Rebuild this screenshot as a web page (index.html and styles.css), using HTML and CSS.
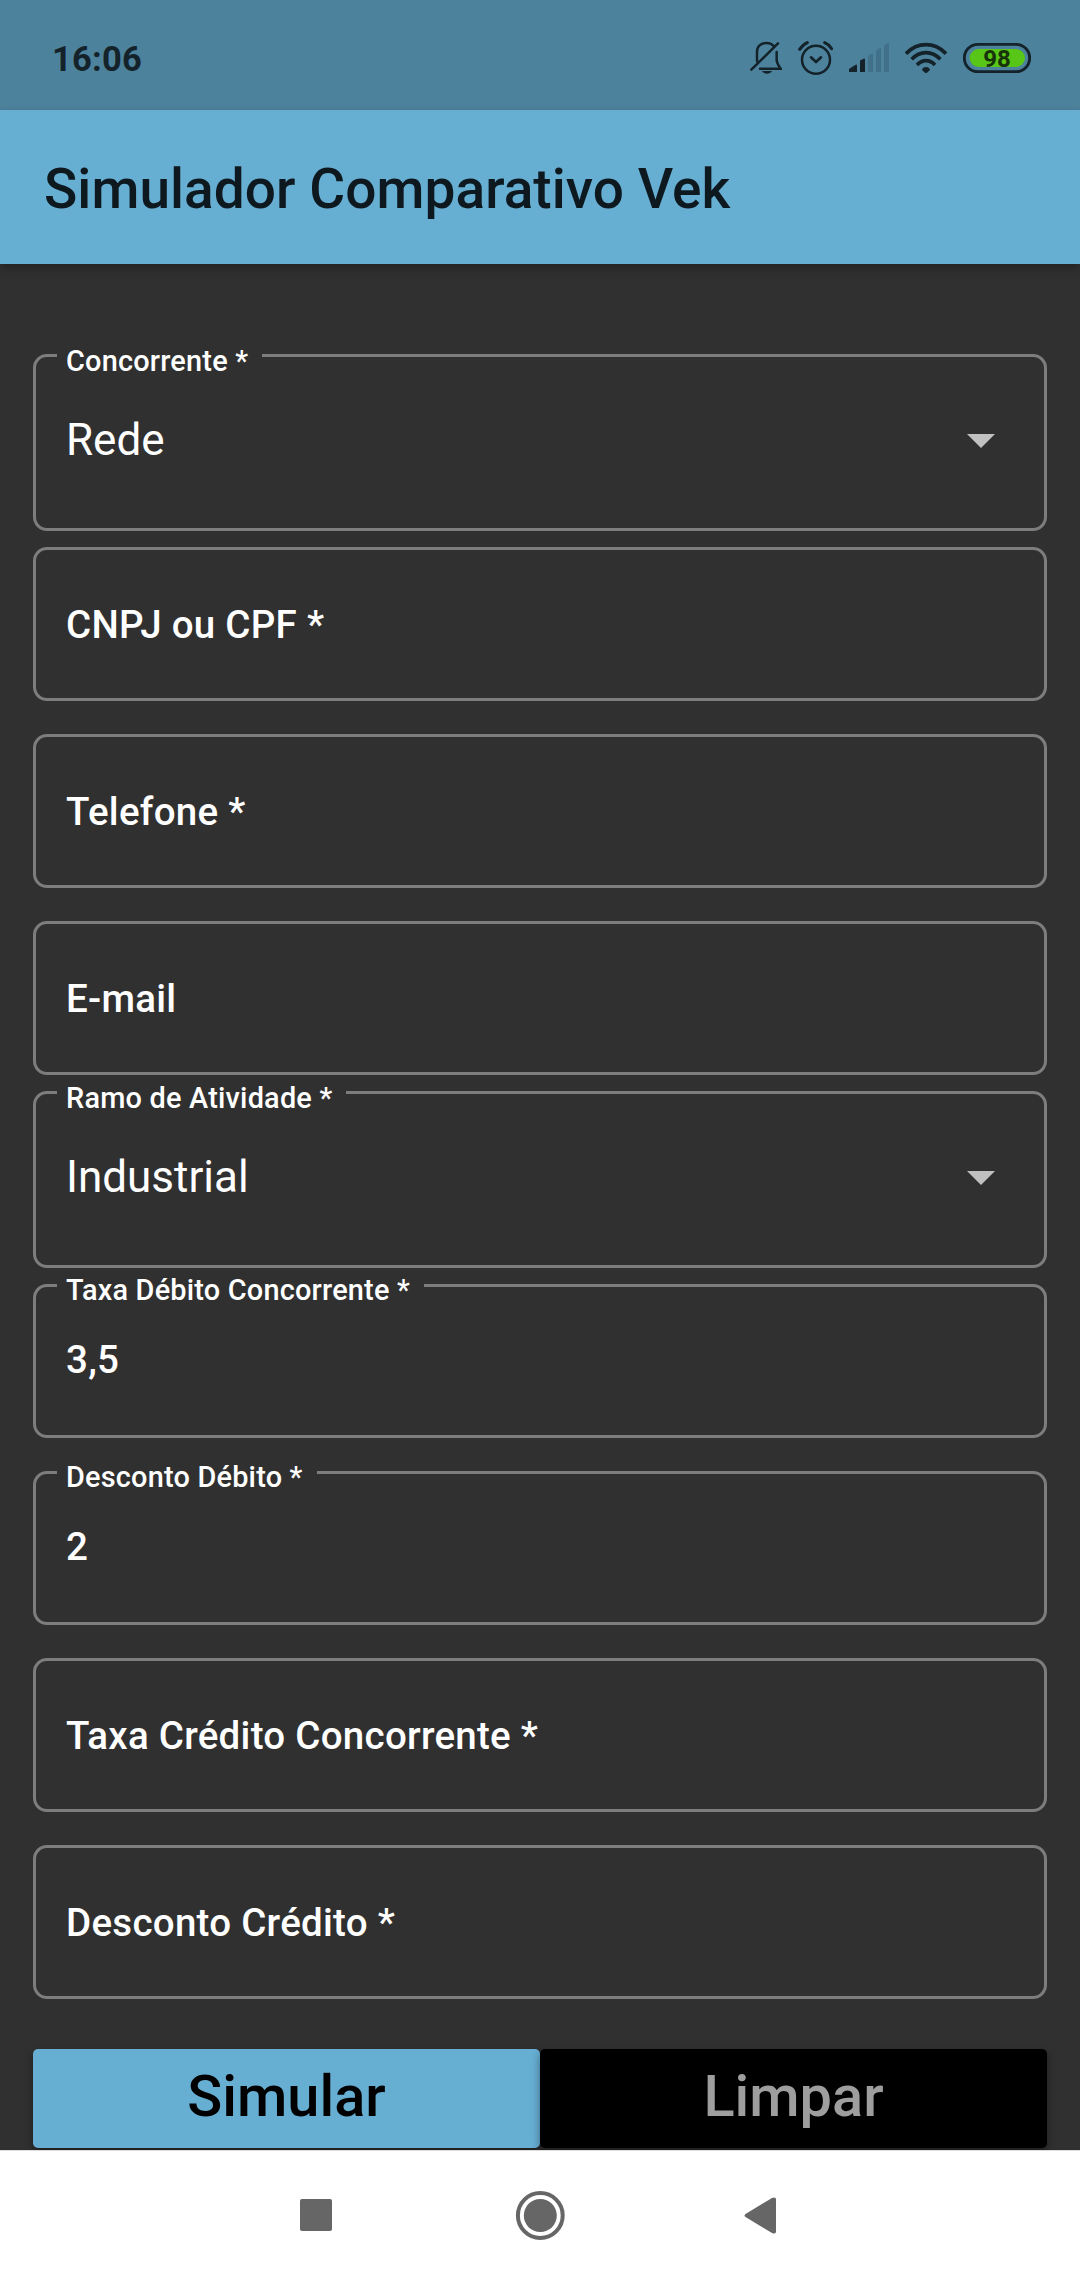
FILE: index.html
```html
<!DOCTYPE html>
<html lang="pt-BR">
<head>
<meta charset="utf-8">
<title>Simulador Comparativo Vek</title>
<link rel="stylesheet" href="styles.css">
</head>
<body>
<div class="screen">
  <header class="status-bar">
    <span class="clock">16:06</span>
    <div class="status-icons">
      <svg width="32" height="36" viewBox="90 60 96 108" fill="none" stroke="#14222a" stroke-width="7.500" stroke-linecap="round">
        <path d="M111 124V96C111 78 124 69 140 69C148 69 155 72 160 77M170 96V120C170 130 177 138 182 146H120M94 149L174 70"/>
        <path d="M126 153H156C150 164 132 164 126 153Z" fill="#14222a" stroke="none"/>
      </svg>
      <svg width="35" height="36" viewBox="234 60 105 108" fill="none" stroke="#14222a" stroke-width="7.500" stroke-linecap="round" stroke-linejoin="round">
        <circle cx="288" cy="119" r="42"/>
        <path d="M273 112L288 126L303 112" stroke-width="8"/>
        <path d="M239 88Q248 74 262 68M314 68Q328 74 335 86" stroke-width="9"/>
      </svg>
      <svg width="40" height="36" viewBox="387 60 120 108" fill="#14222a">
        <path d="M387 156V149Q387 146 390 145L407 134Q411 132 411 137V156ZM420 156V124Q420 121 423 120L431 116Q435 115 435 120V156Z"/>
        <path fill="#41708a" d="M444 156V110Q444 107 447 106L455 102Q459 100 459 105V156ZM468 156V94Q468 91 471 89L479 85Q483 83 483 88V156ZM492 156V79Q492 76 495 74L503 69Q507 68 507 72V156Z"/>
      </svg>
      <svg width="42" height="36" viewBox="555 60 126 108" fill="none" stroke="#14222a" stroke-width="11">
        <path d="M558 101Q584 74 618 74Q652 74 678 101M575 118Q594 98 618 98Q642 98 661 118M591 135Q603 122 618 122Q633 122 645 135"/>
        <path d="M606 150Q608 141 618 141Q628 141 630 150L621 158Q618 160 615 158Z" fill="#14222a" stroke="none"/>
      </svg>
      <svg width="68" height="36" viewBox="729 60 204 108">
        <rect x="733" y="73" width="196" height="82" rx="41" fill="none" stroke="#14222a" stroke-width="8.500"/>
        <rect x="749" y="87" width="166" height="54" rx="27" fill="#58c616"/>
        <text class="battery-level" x="831" y="140" text-anchor="middle">98</text>
      </svg>
    </div>
  </header>
  <div class="app-bar"><h1>Simulador Comparativo Vek</h1></div>
  <main class="form">
    <fieldset class="field select">
      <legend>Concorrente *</legend>
      <span>Rede</span>
      <svg class="arrow" width="28" height="14" viewBox="0 0 28 14"><path d="M0 0H28L14 14Z"/></svg>
    </fieldset>
    <fieldset class="field after-select"><span>CNPJ ou CPF *</span></fieldset>
    <fieldset class="field"><span>Telefone *</span></fieldset>
    <fieldset class="field"><span>E-mail</span></fieldset>
    <fieldset class="field select close">
      <legend>Ramo de Atividade *</legend>
      <span>Industrial</span>
      <svg class="arrow" width="28" height="14" viewBox="0 0 28 14"><path d="M0 0H28L14 14Z"/></svg>
    </fieldset>
    <fieldset class="field after-select filled"><legend>Taxa Débito Concorrente *</legend><span>3,5</span></fieldset>
    <fieldset class="field filled"><legend>Desconto Débito *</legend><span>2</span></fieldset>
    <fieldset class="field"><span>Taxa Crédito Concorrente *</span></fieldset>
    <fieldset class="field"><span>Desconto Crédito *</span></fieldset>
    <div class="actions">
      <button class="primary">Simular</button>
      <button class="secondary">Limpar</button>
    </div>
  </main>
  <nav class="nav-bar">
    <svg width="50" height="50" viewBox="0 0 50 50"><rect x="9" y="9" width="32" height="32" rx="2"/></svg>
    <svg width="50" height="50" viewBox="0 0 50 50"><circle cx="25.300" cy="25.500" r="22.400" fill="none" stroke="#666" stroke-width="4"/><circle cx="25.300" cy="25.500" r="16.500"/></svg>
    <svg width="50" height="50" viewBox="0 0 50 50"><path d="M6.500 24Q4.500 25.500 6.500 27L33 43Q37 44.500 37 41.500V9.500Q37 6.500 33 8Z"/></svg>
  </nav>
</div>
</body>
</html>
```
FILE: styles.css
```css
* { box-sizing: border-box; }
body { margin: 0; background: #303030; font-family: Roboto, "Liberation Sans", sans-serif; }
.screen { width: 1080px; height: 2280px; display: flex; flex-direction: column; overflow: hidden; }
.status-bar {
  height: 110px; flex: none; background: #4d829d; color: #14222a;
  display: flex; justify-content: space-between; padding: 40px 49px 0 52px;
}
.clock { font-size: 34.5px; line-height: 38px; font-weight: 700; letter-spacing: .2px; }
.status-icons { display: flex; gap: 16px; }
.battery-level { font-size: 72px; font-weight: 700; fill: #17330b; }
.app-bar {
  height: 154px; flex: none; background: #67aed3; padding: 3px 0 0 44px;
  display: flex; align-items: center; box-shadow: 0 4px 9px rgba(0, 0, 0, .3);
}
h1 { margin: 0; font-size: 55px; font-weight: 500; line-height: 64px; letter-spacing: .05px; color: #0e191f; }
.form { flex: 1; padding: 90px 33px 0; color: #fff; }
.field {
  display: flex; align-items: center; min-width: 0; width: 1014px; height: 154px;
  margin: 33px 0 0; padding: 2px 49px 0 30px;
  border: 3px solid #7d7d7d; border-radius: 14px;
  font-size: 38.5px; font-weight: 500; line-height: 46px; letter-spacing: .275px;
}
.field.select {
  height: 177px; margin-top: 0; padding-top: 0; padding-bottom: 5px;
  justify-content: space-between; font-size: 44px; font-weight: 400; letter-spacing: 0;
}
.field.close { margin-top: 16px; }
.field.after-select { margin-top: 16px; }
.field.filled { padding-top: 0; padding-bottom: 2px; }
legend {
  height: 3px; margin-left: -9px; padding: 0 14px 0 9px;
  font-size: 28.9px; font-weight: 500; line-height: 14px; letter-spacing: .2px; white-space: nowrap;
}
.filled legend { line-height: 12px; }
.arrow { fill: #c1c1c1; margin-top: 1px; }
.actions { display: flex; margin-top: 50px; }
button {
  flex: 1; height: 99px; border: 0; border-radius: 5px; padding: 0 0 6px;
  font: 500 57.75px/68px Roboto, "Liberation Sans", sans-serif;
  box-shadow: 0 4px 8px rgba(0, 0, 0, .4);
}
.primary { background: #67aed3; color: #000; }
.secondary { background: #000; color: #9e9e9e; }
.nav-bar {
  position: relative; height: 130px; flex: none; background: #fff; border-top: 1px solid #ddd;
  display: flex; justify-content: center; gap: 174px; padding-top: 39px; fill: #666;
}
```
